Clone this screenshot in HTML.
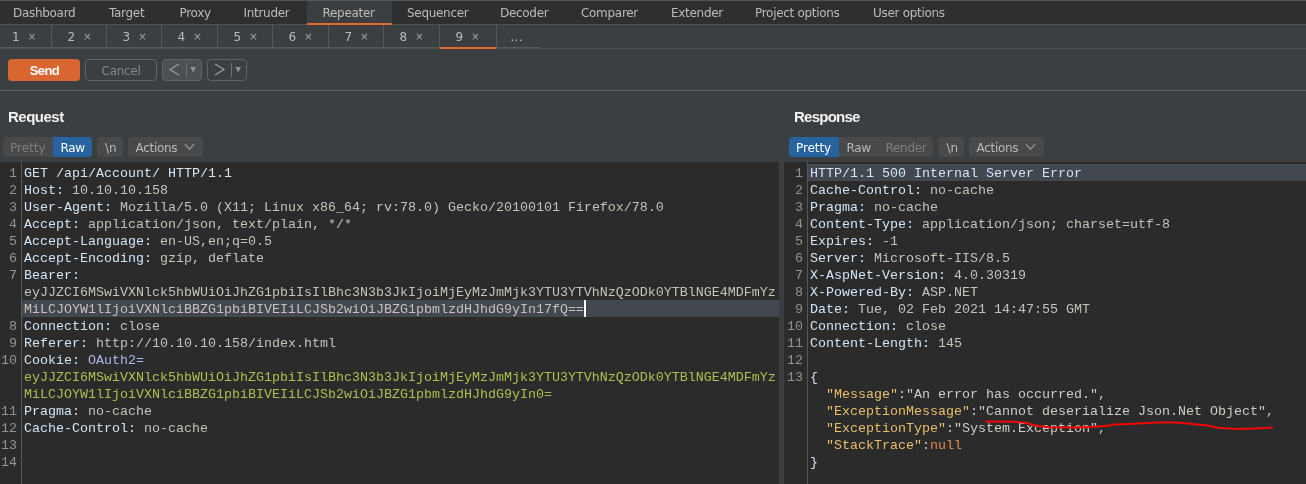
<!DOCTYPE html>
<html><head><meta charset="utf-8"><title>Burp Suite Repeater</title>
<style>
*{box-sizing:border-box;margin:0;padding:0}
html,body{width:1306px;height:484px;overflow:hidden;background:#3c3f41}
body{position:relative;font-family:"DejaVu Sans","Liberation Sans",sans-serif;font-size:12px;letter-spacing:-0.3px;color:#bbbbbb}
.abs,.t,.n,.x,.sep,.ln,.tx,.b,.bt,.h1{position:absolute}
#topbar{left:0;top:0;width:1306px;height:25px;background:#2d2f31;border-top:1px solid #555657;border-bottom:1px solid #515354}
.t{top:2px;height:23px;line-height:23px;white-space:nowrap;color:#bbbbbb}
#topsel{left:307px;top:1px;width:85px;height:24px;background:#3c3f41;border-bottom:2px solid #e36b2f}
.n,.x{top:26px;height:23px;line-height:23px;white-space:nowrap}
.x{font-size:10px;line-height:21px;color:#a4a4a4}
.sep{top:25px;width:1px;height:23px;background:#555759}
.mono{letter-spacing:0;font-family:"Liberation Mono","DejaVu Sans Mono",monospace;font-size:13.333px;line-height:17px;height:17px;white-space:pre}
.ln{text-align:right;color:#939393}
.hn{color:#d2e4f4}.hv{color:#c6c1ba}.pn{color:#aeb8ed}.pv{color:#a8c050}
.jk{color:#e8bf6a}.js{color:#cfcbc4}.jn{color:#e8864a}
.ed{background:#2b2b2b}
.b{top:137px;height:20px;background:#48494b;border-radius:4px}
.bt{top:138px;height:20px;line-height:20px;white-space:nowrap}
.h1{font-family:"Liberation Sans",sans-serif;font-weight:bold;font-size:15px;letter-spacing:-0.5px;color:#f2f2f2;top:107.5px;line-height:17px;white-space:nowrap}
</style></head><body>
<div id="w" style="position:absolute;left:0;top:0;width:1306px;height:484px;will-change:transform">
<div id="topbar" class="abs"></div>
<div id="topsel" class="abs"></div>
<span class="t" style="left:13px">Dashboard</span>
<span class="t" style="left:109px">Target</span>
<span class="t" style="left:179.5px">Proxy</span>
<span class="t" style="left:243.5px">Intruder</span>
<span class="t" style="left:322.5px">Repeater</span>
<span class="t" style="left:407px">Sequencer</span>
<span class="t" style="left:500px">Decoder</span>
<span class="t" style="left:581px">Comparer</span>
<span class="t" style="left:671px">Extender</span>
<span class="t" style="left:755px">Project options</span>
<span class="t" style="left:873px">User options</span>
<div class="abs" style="left:0;top:47px;width:540px;height:2px;background:#57595a"></div>
<div class="abs" style="left:0;top:48px;width:1306px;height:1px;background:#505355"></div>
<span class="n" style="left:12px">1</span><span class="x" style="left:27.7px">×</span><span class="n" style="left:67.4px">2</span><span class="x" style="left:83.2px">×</span><span class="n" style="left:122.4px">3</span><span class="x" style="left:138.2px">×</span><span class="n" style="left:177.4px">4</span><span class="x" style="left:193.2px">×</span><span class="n" style="left:233.4px">5</span><span class="x" style="left:249.2px">×</span><span class="n" style="left:288.4px">6</span><span class="x" style="left:304.2px">×</span><span class="n" style="left:344.4px">7</span><span class="x" style="left:360.2px">×</span><span class="n" style="left:399.4px">8</span><span class="x" style="left:415.2px">×</span><span class="n" style="left:455.4px">9</span><span class="x" style="left:471.2px">×</span><i class="sep" style="left:51px"></i><i class="sep" style="left:106px"></i><i class="sep" style="left:161px"></i><i class="sep" style="left:217px"></i><i class="sep" style="left:272px"></i><i class="sep" style="left:328px"></i><i class="sep" style="left:383px"></i><i class="sep" style="left:439px"></i><i class="sep" style="left:496px"></i>
<div class="abs" style="left:440px;top:47px;width:56px;height:2px;background:#e36b2f"></div>
<span class="n" style="left:510.5px;letter-spacing:0.3px">...</span>

<div class="abs" style="left:8px;top:59px;width:72px;height:22px;background:#d96630;border-radius:4px;color:#fff;font-family:'Liberation Sans',sans-serif;font-weight:bold;font-size:13px;letter-spacing:-0.6px;text-align:center;padding-left:1px;line-height:23px">Send</div>
<div class="abs" style="left:85px;top:59px;width:72px;height:22px;border:1px solid #646769;border-radius:4px;color:#858789;text-align:center;line-height:22px">Cancel</div>
<div class="abs" style="left:162px;top:59px;width:40px;height:22px;border:1px solid #606365;border-radius:4px;background:#4c5052"></div>
<div class="abs" style="left:207px;top:59px;width:40px;height:22px;border:1px solid #606365;border-radius:4px"></div>
<svg class="abs" style="left:162px;top:59px" width="85" height="22" viewBox="0 0 85 22">
<path d="M17 5 L8 10.5 L17 16" fill="none" stroke="#9a9c9e" stroke-width="1.3"/>
<path d="M24.5 4 V18" stroke="#6e7173" stroke-width="1"/>
<path d="M28.3 8 H34 L31.15 13.5 Z" fill="#8e9092"/>
<path d="M53 5 L62 10.5 L53 16" fill="none" stroke="#9a9c9e" stroke-width="1.3"/>
<path d="M69.5 4 V18" stroke="#6e7173" stroke-width="1"/>
<path d="M73.3 8 H79 L76.15 13.5 Z" fill="#8e9092"/>
</svg>
<div class="abs" style="left:0;top:90px;width:1306px;height:1px;background:#5f6264"></div>

<span class="h1" style="left:8px">Request</span>
<span class="h1" style="left:794px;letter-spacing:-0.75px">Response</span>

<div class="b" style="left:3px;width:89px"></div>
<div class="b" style="left:53px;width:39px;background:#26639f;border-radius:0 4px 4px 0"></div>
<div class="b" style="left:97px;width:26px"></div>
<div class="b" style="left:128px;width:75px"></div>
<span class="bt" style="left:10px;color:#7d8082;letter-spacing:0">Pretty</span>
<span class="bt" style="left:60.5px;color:#fff">Raw</span>
<span class="bt" style="left:105px;letter-spacing:0">\n</span>
<span class="bt" style="left:135.5px">Actions</span>
<svg class="abs" style="left:184px;top:143px" width="12" height="9" viewBox="0 0 12 9"><path d="M1 1.2 L5.5 6.2 L10 1.2" fill="none" stroke="#8c8e90" stroke-width="1.4"/></svg>

<div class="b" style="left:789px;width:144px"></div>
<div class="b" style="left:789px;width:50px;background:#26639f;border-radius:4px 0 0 4px"></div>
<div class="b" style="left:938px;width:26px"></div>
<div class="b" style="left:969px;width:75px"></div>
<span class="bt" style="left:796px;color:#fff;letter-spacing:-0.1px">Pretty</span>
<span class="bt" style="left:846.5px">Raw</span>
<span class="bt" style="left:885.5px;color:#7d8082">Render</span>
<span class="bt" style="left:946.5px;letter-spacing:0">\n</span>
<span class="bt" style="left:976.5px">Actions</span>
<svg class="abs" style="left:1025px;top:143px" width="12" height="9" viewBox="0 0 12 9"><path d="M1 1.2 L5.5 6.2 L10 1.2" fill="none" stroke="#8c8e90" stroke-width="1.4"/></svg>

<div class="abs ed" style="left:0;top:162px;width:779px;height:322px"></div>
<div class="abs" style="left:21px;top:162px;width:1px;height:322px;background:#555759"></div>
<div class="abs" style="left:22px;top:300px;width:757px;height:17px;background:#424750"></div>
<div class="abs" style="left:584px;top:300px;width:2px;height:17px;background:#fff"></div>
<div class="mono ln" style="left:0px;top:165px;width:17px">1</div>
<div class="mono tx" style="left:24px;top:165px"><span class="hn">GET /api/Account/ HTTP/1.1</span></div>
<div class="mono ln" style="left:0px;top:182px;width:17px">2</div>
<div class="mono tx" style="left:24px;top:182px"><span class="hn">Host:</span><span class="hv"> 10.10.10.158</span></div>
<div class="mono ln" style="left:0px;top:199px;width:17px">3</div>
<div class="mono tx" style="left:24px;top:199px"><span class="hn">User-Agent:</span><span class="hv"> Mozilla/5.0 (X11; Linux x86_64; rv:78.0) Gecko/20100101 Firefox/78.0</span></div>
<div class="mono ln" style="left:0px;top:216px;width:17px">4</div>
<div class="mono tx" style="left:24px;top:216px"><span class="hn">Accept:</span><span class="hv"> application/json, text/plain, */*</span></div>
<div class="mono ln" style="left:0px;top:233px;width:17px">5</div>
<div class="mono tx" style="left:24px;top:233px"><span class="hn">Accept-Language:</span><span class="hv"> en-US,en;q=0.5</span></div>
<div class="mono ln" style="left:0px;top:250px;width:17px">6</div>
<div class="mono tx" style="left:24px;top:250px"><span class="hn">Accept-Encoding:</span><span class="hv"> gzip, deflate</span></div>
<div class="mono ln" style="left:0px;top:267px;width:17px">7</div>
<div class="mono tx" style="left:24px;top:267px"><span class="hn">Bearer:</span><span class="hv"> </span></div>
<div class="mono tx" style="left:24px;top:284px"><span class="hv">eyJJZCI6MSwiVXNlck5hbWUiOiJhZG1pbiIsIlBhc3N3b3JkIjoiMjEyMzJmMjk3YTU3YTVhNzQzODk0YTBlNGE4MDFmYz</span></div>
<div class="mono tx" style="left:24px;top:301px"><span class="hv">MiLCJOYW1lIjoiVXNlciBBZG1pbiBIVEIiLCJSb2wiOiJBZG1pbmlzdHJhdG9yIn17fQ==</span></div>
<div class="mono ln" style="left:0px;top:318px;width:17px">8</div>
<div class="mono tx" style="left:24px;top:318px"><span class="hn">Connection:</span><span class="hv"> close</span></div>
<div class="mono ln" style="left:0px;top:335px;width:17px">9</div>
<div class="mono tx" style="left:24px;top:335px"><span class="hn">Referer:</span><span class="hv"> http://10.10.10.158/index.html</span></div>
<div class="mono ln" style="left:0px;top:352px;width:17px">10</div>
<div class="mono tx" style="left:24px;top:352px"><span class="hn">Cookie:</span> <span class="pn">OAuth2=</span></div>
<div class="mono tx" style="left:24px;top:369px"><span class="pv">eyJJZCI6MSwiVXNlck5hbWUiOiJhZG1pbiIsIlBhc3N3b3JkIjoiMjEyMzJmMjk3YTU3YTVhNzQzODk0YTBlNGE4MDFmYz</span></div>
<div class="mono tx" style="left:24px;top:386px"><span class="pv">MiLCJOYW1lIjoiVXNlciBBZG1pbiBIVEIiLCJSb2wiOiJBZG1pbmlzdHJhdG9yIn0=</span></div>
<div class="mono ln" style="left:0px;top:403px;width:17px">11</div>
<div class="mono tx" style="left:24px;top:403px"><span class="hn">Pragma:</span><span class="hv"> no-cache</span></div>
<div class="mono ln" style="left:0px;top:420px;width:17px">12</div>
<div class="mono tx" style="left:24px;top:420px"><span class="hn">Cache-Control:</span><span class="hv"> no-cache</span></div>
<div class="mono ln" style="left:0px;top:437px;width:17px">13</div>
<div class="mono ln" style="left:0px;top:454px;width:17px">14</div>
<div class="abs ed" style="left:784px;top:162px;width:522px;height:322px"></div>
<div class="abs" style="left:807px;top:162px;width:1px;height:322px;background:#555759"></div>
<div class="abs" style="left:808px;top:164px;width:498px;height:17px;background:#424750"></div>
<div class="mono ln" style="left:784px;top:165px;width:19px">1</div>
<div class="mono tx" style="left:810px;top:165px"><span class="hn">HTTP/1.1 500 Internal Server Error</span></div>
<div class="mono ln" style="left:784px;top:182px;width:19px">2</div>
<div class="mono tx" style="left:810px;top:182px"><span class="hn">Cache-Control:</span><span class="hv"> no-cache</span></div>
<div class="mono ln" style="left:784px;top:199px;width:19px">3</div>
<div class="mono tx" style="left:810px;top:199px"><span class="hn">Pragma:</span><span class="hv"> no-cache</span></div>
<div class="mono ln" style="left:784px;top:216px;width:19px">4</div>
<div class="mono tx" style="left:810px;top:216px"><span class="hn">Content-Type:</span><span class="hv"> application/json; charset=utf-8</span></div>
<div class="mono ln" style="left:784px;top:233px;width:19px">5</div>
<div class="mono tx" style="left:810px;top:233px"><span class="hn">Expires:</span><span class="hv"> -1</span></div>
<div class="mono ln" style="left:784px;top:250px;width:19px">6</div>
<div class="mono tx" style="left:810px;top:250px"><span class="hn">Server:</span><span class="hv"> Microsoft-IIS/8.5</span></div>
<div class="mono ln" style="left:784px;top:267px;width:19px">7</div>
<div class="mono tx" style="left:810px;top:267px"><span class="hn">X-AspNet-Version:</span><span class="hv"> 4.0.30319</span></div>
<div class="mono ln" style="left:784px;top:284px;width:19px">8</div>
<div class="mono tx" style="left:810px;top:284px"><span class="hn">X-Powered-By:</span><span class="hv"> ASP.NET</span></div>
<div class="mono ln" style="left:784px;top:301px;width:19px">9</div>
<div class="mono tx" style="left:810px;top:301px"><span class="hn">Date:</span><span class="hv"> Tue, 02 Feb 2021 14:47:55 GMT</span></div>
<div class="mono ln" style="left:784px;top:318px;width:19px">10</div>
<div class="mono tx" style="left:810px;top:318px"><span class="hn">Connection:</span><span class="hv"> close</span></div>
<div class="mono ln" style="left:784px;top:335px;width:19px">11</div>
<div class="mono tx" style="left:810px;top:335px"><span class="hn">Content-Length:</span><span class="hv"> 145</span></div>
<div class="mono ln" style="left:784px;top:352px;width:19px">12</div>
<div class="mono ln" style="left:784px;top:369px;width:19px">13</div>
<div class="mono tx" style="left:810px;top:369px"><span class="hn">{</span></div>
<div class="mono tx" style="left:810px;top:386px">  <span class="jk">&quot;Message&quot;</span><span class="js">:</span><span class="js">&quot;An error has occurred.&quot;</span><span class="js">,</span></div>
<div class="mono tx" style="left:810px;top:403px">  <span class="jk">&quot;ExceptionMessage&quot;</span><span class="js">:</span><span class="js">&quot;Cannot deserialize Json.Net Object&quot;</span><span class="js">,</span></div>
<div class="mono tx" style="left:810px;top:420px">  <span class="jk">&quot;ExceptionType&quot;</span><span class="js">:</span><span class="js">&quot;System.Exception&quot;</span><span class="js">,</span></div>
<div class="mono tx" style="left:810px;top:437px">  <span class="jk">&quot;StackTrace&quot;</span><span class="js">:</span><span class="jn">null</span></div>
<div class="mono tx" style="left:810px;top:454px"><span class="hn">}</span></div>
<svg class="abs" style="left:980px;top:414px" width="300" height="20" viewBox="980 414 300 20"><path d="M986 421.5 L1014.5 421.8 L1028 423 L1032 425 L1049 427.2 L1072 427.6 L1095 426.7 L1110 425.4 L1113 424.6 L1130 423.9 L1138 423.5 L1157 422.6 L1175 422.6 L1187 423.5 L1206 425.3 L1218 427.8 L1236 429 L1255 428.4 L1272 427.5" fill="none" stroke="#f50505" stroke-width="2" stroke-linecap="round" stroke-linejoin="round"/></svg>
</div>
</body></html>
